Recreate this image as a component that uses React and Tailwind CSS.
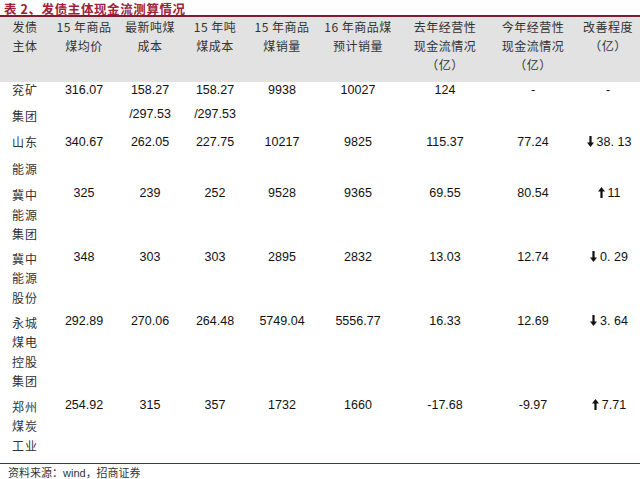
const cols = "grid grid-cols-[50px_68px_64px_66px_68px_84px_90px_86px_64px]";
const cjk = { fontFamily: '"Noto Sans CJK SC", sans-serif' };
const num = { fontFamily: '"Liberation Sans", Arial, sans-serif' };

function Arrow({ up }) {
    return (
        <svg width="7" height="11" viewBox="0 0 7 11" className="inline-block mr-[3px] align-[-1px]">
            {up ? (
                <path d="M3.5 0 L7 4.5 L4.6 4.5 L4.6 11 L2.4 11 L2.4 4.5 L0 4.5 Z" fill="#111" />
            ) : (
                <path d="M3.5 11 L7 6.5 L4.6 6.5 L4.6 0 L2.4 0 L2.4 6.5 L0 6.5 Z" fill="#111" />
            )}
        </svg>
    );
}

const rows = [
    {
        name: ["兖矿", "集团"],
        vals: ["316.07", ["158.27", "/297.53"], ["158.27", "/297.53"], "9938", "10027", "124", "-", "-"],
        pad: "pt-0", lh: "leading-[16px]", gap: "gap-[10px]",
    },
    {
        name: ["山东", "能源"],
        vals: ["340.67", "262.05", "227.75", "10217", "9825", "115.37", "77.24", { down: true, v: "38. 13" }],
        pad: "pt-[10px]", lh: "leading-[16px]", gap: "gap-[11px]",
    },
    {
        name: ["冀中", "能源", "集团"],
        vals: ["325", "239", "252", "9528", "9365", "69.55", "80.54", { down: false, v: "11" }],
        pad: "pt-[8px]", lh: "leading-[19.5px]", gap: "gap-0",
    },
    {
        name: ["冀中", "能源", "股份"],
        vals: ["348", "303", "303", "2895", "2832", "13.03", "12.74", { down: true, v: "0. 29" }],
        pad: "pt-[5px]", lh: "leading-[19.5px]", gap: "gap-0",
    },
    {
        name: ["永城", "煤电", "控股", "集团"],
        vals: ["292.89", "270.06", "264.48", "5749.04", "5556.77", "16.33", "12.69", { down: true, v: "3. 64" }],
        pad: "pt-[5.5px]", lh: "leading-[19.5px]", gap: "gap-0",
    },
    {
        name: ["郑州", "煤炭", "工业"],
        vals: ["254.92", "315", "357", "1732", "1660", "-17.68", "-9.97", { down: false, v: "7.71" }],
        pad: "pt-[6px] pb-[7.5px]", lh: "leading-[19.5px]", gap: "gap-0",
    },
];

const header = [
    ["发债", "主体"],
    ["15 年商品", "煤均价"],
    ["最新吨煤", "成本"],
    ["15 年吨", "煤成本"],
    ["15 年商品", "煤销量"],
    ["16 年商品煤", "预计销量"],
    ["去年经营性", "现金流情况", "（亿）"],
    ["今年经营性", "现金流情况", "（亿）"],
    ["改善程度", "（亿）"],
];

export default function App() {
    return (
        <div className="w-[640px] h-[479px] bg-white overflow-hidden">
            <div className="pt-[2px] pl-[4px] leading-[13px] text-[12.5px] font-bold text-[#a0213a] tracking-[0.6px]" style={cjk}>
                表 2、发债主体现金流测算情况
            </div>
            <div className="h-[2px] bg-[#7d1f30]" />
            <div className={cols + " bg-[#e2e2e2] pb-[8px] text-[12px] leading-[19px] text-[#333] text-center"} style={cjk}>
                {header.map((h, i) => (
                    <div key={i} className="flex flex-col items-center">
                        {h.map((t, j) => (
                            <span key={j} className="whitespace-nowrap tracking-[0.5px]">{t}</span>
                        ))}
                    </div>
                ))}
            </div>
            {rows.map((r, i) => (
                <div key={i} className={cols + " " + r.pad + " text-[#111]"}>
                    <div className={"flex flex-col items-center text-[12px] tracking-[1px] text-[#333] " + r.lh + " " + r.gap} style={cjk}>
                        {r.name.map((n, j) => <span key={j}>{n}</span>)}
                    </div>
                    {r.vals.map((v, j) => (
                        <div key={j} className="flex flex-col items-center text-[12.5px] leading-[16px] whitespace-nowrap" style={num}>
                            {Array.isArray(v) ? (
                                <>
                                    <span>{v[0]}</span>
                                    <span className="mt-[8px]">{v[1]}</span>
                                </>
                            ) : typeof v === "object" ? (
                                <span className="pl-[2px]"><Arrow up={!v.down} />{v.v}</span>
                            ) : (
                                <span>{v}</span>
                            )}
                        </div>
                    ))}
                </div>
            ))}
            <div className="h-[1.5px] bg-[#6e2438]" />
            <div className="pl-[8px] text-[11px] leading-[16px] text-[#333]" style={cjk}>
                资料来源：<span style={num}>wind</span>，招商证券
            </div>
        </div>
    );
}
